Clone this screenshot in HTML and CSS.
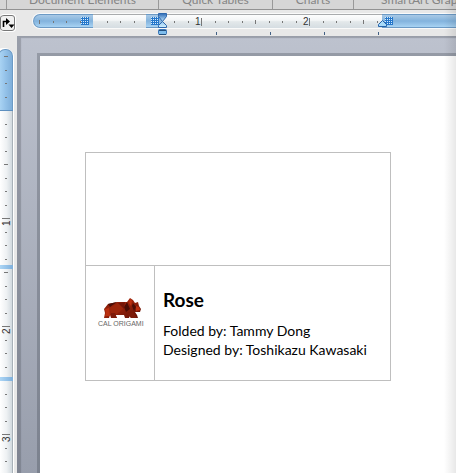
FILE: index.html
```
<!DOCTYPE html>
<html lang="en">
<head>
<meta charset="utf-8">
<title>Document</title>
<link rel="stylesheet" href="styles.css">
</head>
<body>
<div class="window">
  <nav class="tabs">
    <button class="tab tab-wide" type="button">Document Elements</button>
    <button class="tab tab-mid" type="button">Quick Tables</button>
    <button class="tab tab-small" type="button">Charts</button>
    <button class="tab tab-last" type="button">SmartArt Graphics</button>
  </nav>
  <div class="ruler-row">
    <button class="tab-stop" type="button" aria-label="Tab stop">
      <svg width="14" height="14" viewBox="0 0 14 14"><path d="M2.500 11V5.500H7" fill="none" stroke="#000" stroke-width="1.600"/><path d="M5 2l4 3.500L5 9zM7.500 8.500h6L10.500 12z"/></svg>
    </button>
    <svg class="ruler-h" height="26">
      <defs>
        <linearGradient id="hb" x2="0" y2="1"><stop offset="0" stop-color="#a9c9e6"/><stop offset=".5" stop-color="#83b3dd"/><stop offset="1" stop-color="#a8d3f3"/></linearGradient>
        <linearGradient id="hw" x2="0" y2="1"><stop offset="0" stop-color="#fff"/><stop offset=".45" stop-color="#f3f5f6"/><stop offset=".55" stop-color="#e3e8ea"/><stop offset="1" stop-color="#d5dde2"/></linearGradient>
        <linearGradient id="mt" x2="0" y2="1"><stop offset="0" stop-color="#2c69b5"/><stop offset="1" stop-color="#c6ebff"/></linearGradient>
        <linearGradient id="mb" x2="0" y2="1"><stop offset="0" stop-color="#8fc4ee"/><stop offset="1" stop-color="#d3f1ff"/></linearGradient>
        <pattern id="grid" width="2" height="2" patternUnits="userSpaceOnUse"><rect width="2" height="2" fill="#2577cb"/><rect x="1" y="1" width="1" height="1" fill="#d4eafb"/></pattern>
      </defs>
      <rect x="0" y="3" width="110%" height="16" rx="8" fill="#fafafa"/>
      <rect x="1" y="4" width="110%" height="14" rx="7" fill="#6c9ac5"/>
      <rect x="2" y="5" width="110%" height="12" rx="6" fill="url(#hb)"/>
      <path d="M61 4h53v14H61zM131 4h219v14H131z" fill="url(#hw)"/>
      <path d="M61 4.500h53M131 4.500h219" stroke="#a9abad"/>
      <path d="M7.500 10v4M223.500 10v4M331.500 10v4M21.500 11v2M34.500 11v2M48.500 11v2M75.500 11v2M88.500 11v2M102.500 11v2M142.500 11v2M156.500 11v2M183.500 11v2M196.500 11v2M210.500 11v2M237.500 11v2M250.500 11v2M264.500 11v2M291.500 11v2M304.500 11v2M318.500 11v2M345.500 11v2M169.500 8v8M277.500 8v8" stroke="#777"/>
      <text x="163" y="15" class="num">1</text><text x="271" y="15" class="num">2</text>
      <path d="M49 7h8v8h-8zM119 7h8v8h-8zM353 7h8v8h-8z" fill="url(#grid)"/>
      <path d="M126.500 3.500h8v3l-4 5l-4-5z" fill="url(#mt)" stroke="#2f68ad"/>
      <path d="M130.500 11.500l4 4v2h-8v-2z" fill="url(#mb)" stroke="#2f68ad"/>
      <rect x="126.500" y="19.500" width="8" height="5" rx="1" fill="#7fbdec" stroke="#3a76b8"/>
      <path d="M127 20.500h7M127 24.500h7" stroke="#23507f"/>
      <path d="M346.500 16.500v-2l4-4l4 4v2z" fill="#a8daf8" stroke="#2563ab"/>
      <path d="M184.500 22v3M238.500 22v3M292.500 22v3M346.500 22v3" stroke="#426084"/>
    </svg>
  </div>
  <main class="workspace">
    <aside class="side">
      <svg class="ruler-v" width="17" height="100%">
        <defs>
          <linearGradient id="vb"><stop offset="0" stop-color="#add6f5"/><stop offset=".5" stop-color="#94c2e9"/><stop offset="1" stop-color="#7fafda"/></linearGradient>
          <linearGradient id="vw"><stop offset="0" stop-color="#fff"/><stop offset=".5" stop-color="#eef1f3"/><stop offset="1" stop-color="#ccd5db"/></linearGradient>
        </defs>
        <rect x="-6" y="12" width="20" height="110%" rx="9" fill="#fff"/>
        <rect x="-2" y="13" width="15" height="110%" rx="7" fill="#6c9ac5"/>
        <rect x="-1" y="14" width="13" height="110%" rx="6" fill="url(#vb)"/>
        <rect y="75" width="13" height="100%" fill="url(#vw)"/>
        <rect x="12" y="75" width="1" height="100%" fill="#a8b1b8"/>
        <path d="M0 74.500h13" stroke="#5d8fbf"/>
        <path d="M0 229h13v4H0zM0 341h13v4H0z" fill="url(#vb)"/>
        <path d="M4 20.500h4M4 128.500h4M4 236.500h4M5 34.500h2M5 47.500h2M5 61.500h2M5 88.500h2M5 101.500h2M5 115.500h2M5 142.500h2M5 155.500h2M5 169.500h2M5 196.500h2M5 209.500h2M5 223.500h2M5 250.500h2M5 263.500h2M5 277.500h2M5 304.500h2M5 317.500h2M5 331.500h2M5 358.500h2M5 371.500h2M5 385.500h2M5 412.500h2M5 425.500h2M2 182.500h8M2 290.500h8M2 398.500h8" stroke="#777"/>
        <text class="num" transform="translate(10 190) rotate(-90)">1</text>
        <text class="num" transform="translate(10 298) rotate(-90)">2</text>
        <text class="num" transform="translate(10 406) rotate(-90)">3</text>
      </svg>
    </aside>
    <div class="canvas">
      <article class="page">
        <table class="card">
          <colgroup><col class="col-logo"><col></colgroup>
          <tbody>
            <tr class="card-top"><td colspan="2"></td></tr>
            <tr class="card-bottom">
              <td class="logo-cell">
                <svg width="50" height="30" viewBox="0 0 50 30" role="img" aria-label="Cal Origami">
                  <defs><linearGradient id="red" x2="1" y2="1"><stop offset="0" stop-color="#6d1508"/><stop offset=".4" stop-color="#9f250b"/><stop offset="1" stop-color="#5d1007"/></linearGradient></defs>
                  <path d="M7 11L11 6L20 4L30 4L33 0L36 2L38 5L41 4L42 8L44 11L43 14L38 14L40 17L41 20L34 20L33 17L32 20L28 20L27 17L18 17L20 20L14 20L13 17L12 20L7 20L8 15z" fill="url(#red)"/>
                  <path d="M11 6l9-2l-7 5zM30 4l3 7l-4 3l-2-5zM36 5l3 4l-2 4l-2-5z" fill="#4a0e06"/>
                  <path d="M8 11l4-1l1 8H8l1-3zM33 1l2 2l-1 5l-2-3zM39 8l3 1l1 3l-4 1z" fill="#bb3010"/>
                  <path d="M13 10l8-5l6 5l-7 6l-6-1z" fill="#9c260b"/>
                  <path d="M21 5l7-1l-1 7z" fill="#741608"/>
                  <path d="M14 15h4l2 5h-6zM29 15l7-1l4 6h-6z" fill="#7d1b09"/>
                  <text x="1" y="28" class="logo-text">CAL ORIGAMI</text>
                </svg>
              </td>
              <td class="info">
                <h1>Rose</h1>
                <p>Folded by: Tammy Dong</p>
                <p>Designed by: Toshikazu Kawasaki</p>
              </td>
            </tr>
          </tbody>
        </table>
      </article>
    </div>
  </main>
</div>
</body>
</html>
```
FILE: styles.css
```
* { box-sizing: border-box; }
body { margin: 0; background: #e8e8e8; font-family: Lato, "Liberation Sans", sans-serif; }
.window { position: relative; display: flex; flex-direction: column; height: 100vh; overflow: hidden; }
.window::after { content: ""; position: absolute; inset: 0 0 0 auto; width: 12px; background: linear-gradient(to right, rgba(0, 0, 0, 0), rgba(0, 0, 0, .09)); pointer-events: none; }
.tabs { display: flex; flex: none; height: 10px; padding-left: 6px; background: #d6d6d6; border-bottom: 1px solid #929292; overflow: hidden; }
.tab { display: flex; flex: none; justify-content: center; align-items: flex-end; height: 9px; padding: 0 0 1px; border: 0; border-left: 1px solid #999; background: none; color: #858585; font: 12px/16px Lato, sans-serif; white-space: nowrap; }
.tab-wide { width: 152px; }
.tab-mid { width: 114px; }
.tab-small { width: 81px; }
.tab-last { width: 152px; }
.ruler-row { display: flex; flex: none; height: 26px; background: #e8e8e8; }
.tab-stop { display: flex; flex: none; align-items: center; justify-content: center; width: 16px; height: 18px; margin: 4px 16px 0 0; padding: 0; border: 1px solid #fff; border-left: 0; border-radius: 4px; background: #f1f1f1; box-shadow: inset 0 0 0 1px #777; }
.ruler-h { flex: 1; min-width: 0; }
.num { font: 10px "Liberation Sans", sans-serif; fill: #333; }
.workspace { display: flex; flex: 1; min-height: 0; }
.side { flex: none; width: 17px; overflow: hidden; }
.ruler-v { display: block; }
.canvas { display: flex; flex: 1; min-width: 0; padding: 17px 0 0 20px; background: linear-gradient(#bdc2ce, #989eac); box-shadow: inset 4px 2px 1px rgba(60, 65, 75, .28); }
.page { flex: 1; min-width: 0; padding: 96px 0 0 45px; border: solid rgba(60, 65, 75, .3); border-width: 3px 0 0 3px; background: #fff; background-clip: padding-box; }
.card { width: 306px; border-collapse: collapse; table-layout: fixed; }
.col-logo { width: 69px; }
.card td { padding: 0; border: 1px solid #bfbfbf; }
.card-top { height: 113px; }
.card-bottom { height: 115px; }
.card .logo-cell { padding: 32px 0 0 11px; vertical-align: top; }
.logo-cell svg { display: block; }
.logo-text { font: 7px "Liberation Sans", sans-serif; fill: #666; }
.card .info { padding: 22px 0 0 8px; vertical-align: top; }
h1 { margin: 0 0 9px; font-size: 19px; line-height: 24px; }
p { margin: 0; font-size: 14px; line-height: 19px; white-space: nowrap; }
```
